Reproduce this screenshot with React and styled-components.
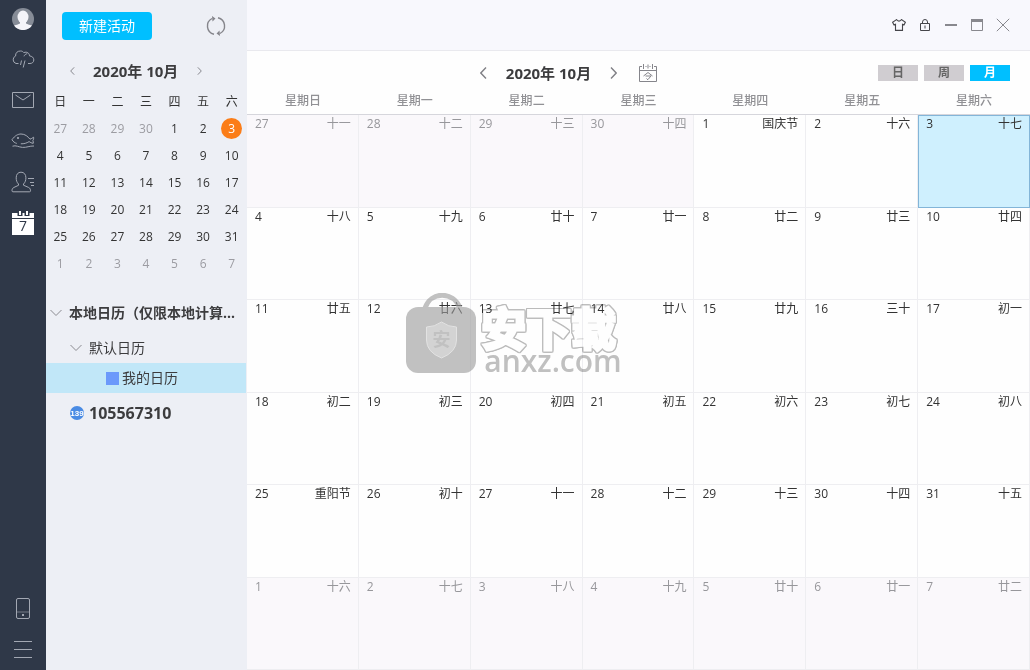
import React, { useState } from "react"
import styled, { createGlobalStyle } from 'styled-components'

const GlobalStyle = createGlobalStyle`
    * {
        box-sizing: border-box;
    }
    body {
        margin: 0;
        color: #333;
        font: 12px/18px "Open Sans", "Noto Sans CJK SC", sans-serif;
    }
    button {
        padding: 0;
        border: 0;
        background: none;
        color: inherit;
        font: inherit;
        cursor: pointer;
    }
    svg {
        display: block;
        fill: none;
        stroke: currentColor;
    }
`

const Window = styled.div`
    position: relative;
    display: flex;
    min-height: 100vh;
    background: #fefefe;
`

const Rail = styled.nav`
    display: flex;
    flex: none;
    flex-direction: column;
    width: 46px;
    background: #2f3848;
    color: #a3a8b3;
`
const RailButton = styled.button`
    display: flex;
    align-items: center;
    justify-content: center;
    height: ${props => props.$first ? '38px' : '41px'};
`
const RailSpace = styled.div`
    flex: 1;
`

const Sidebar = styled.aside`
    flex: none;
    width: 201px;
    padding-right: 1px;
    background: #edeff5;
`
const SideTop = styled.div`
    display: flex;
    align-items: center;
    justify-content: space-between;
    height: 52px;
    padding: 0 20px 0 16px;
`
const NewButton = styled.button`
    width: 90px;
    height: 28px;
    border-radius: 4px;
    background: #00bfff;
    color: #fff;
    font-size: 14px;
`
const IconButton = styled.button`
    color: #85858b;
`
const SideMonth = styled.div`
    display: flex;
    align-items: center;
    gap: 11px;
    height: 37px;
    padding-left: 16px;
`
const Arrow = styled.button`
    display: flex;
    justify-content: center;
    width: 20px;
    color: #808086;
`
const MonthTitle = styled.h2`
    margin: 0;
    color: #3c3c3e;
    font-size: 15px;
    line-height: 20px;
`

const MiniTable = styled.table`
    width: 100%;
    border-collapse: collapse;
    table-layout: fixed;
    text-align: center;

    th {
        height: 26px;
        padding: 0;
        font-weight: normal;
    }
    td {
        height: 27px;
        padding: 0;
    }
`
const MiniDay = styled.button`
    width: 21px;
    height: 21px;
    border-radius: 50%;
    background: ${props => props.$today ? '#fb7d18' : 'none'};
    color: ${props => props.$today ? '#fff' : props.$muted ? '#9c9ca2' : '#333'};
`

const Tree = styled.div`
    display: flex;
    flex-direction: column;
    padding-top: 16px;
`
const TreeRow = styled.button`
    display: flex;
    align-items: center;
    gap: ${props => props.$gap}px;
    height: ${props => props.$root ? '40px' : '30px'};
    padding-left: ${props => props.$indent}px;
    background: ${props => props.$active ? '#c1e7f8' : 'none'};
    color: #3c3c3e;
    font-size: ${props => props.$account ? '16px' : '14px'};
    font-weight: ${props => props.$root ? 'bold' : 'normal'};
    white-space: nowrap;
`
const Swatch = styled.span`
    width: 13px;
    height: 13px;
    background: #6b99fb;
`

const Main = styled.main`
    display: flex;
    flex: 1;
    flex-direction: column;
    min-width: 0;
`
const TitleBar = styled.header`
    display: flex;
    align-items: center;
    justify-content: flex-end;
    height: 51px;
    padding-right: 14px;
    border-bottom: 1px solid #e9e9ee;
    background: #f8f8fd;
`
const WindowButton = styled.button`
    display: flex;
    justify-content: center;
    width: 26px;
    color: ${props => props.$dark ? '#45454a' : '#88888e'};
`
const Toolbar = styled.div`
    display: flex;
    align-items: center;
    height: 36px;
    padding: 8px 20px 0 6px;
`
const MonthNav = styled.div`
    display: flex;
    flex: 1;
    align-items: center;
    justify-content: center;
    gap: 12px;
`
const TodayButton = styled(IconButton)`
    margin-left: 4px;
`
const Views = styled.div`
    display: flex;
    gap: 6px;
`
const ViewButton = styled.button`
    width: 40px;
    height: 16px;
    background: ${props => props.$active ? '#00bfff' : '#d0cdd1'};
    color: ${props => props.$active ? '#fff' : '#666'};
    font-weight: bold;
    line-height: 16px;
`

const MonthTable = styled.table`
    display: flex;
    flex: 1;
    flex-direction: column;
`
const MonthHead = styled.thead`
    display: block;
    color: #919195;
`
const MonthBody = styled.tbody`
    display: flex;
    flex: 1;
    flex-direction: column;
    border-top: 1px solid #d6d6dc;
`
const Week = styled.tr`
    display: grid;
    flex: 1;
    grid-template-columns: repeat(7, 1fr);
`
const WeekDay = styled.th`
    padding: 0;
    font-weight: 500;
    line-height: 27px;
`
const Day = styled.td`
    display: flex;
    justify-content: space-between;
    padding: 0 7px 0 ${props => props.$selected ? '7px' : '8px'};
    border: 1px solid;
    border-width: ${props => props.$selected ? '1px' : '0 1px 1px 0'};
    border-color: ${props => props.$selected ? '#83b5d8' : '#eeeef1'};
    background: ${props => props.$selected ? '#cff0fe' : props.$muted ? '#faf8fb' : '#fefefe'};
    color: ${props => props.$muted ? '#97979b' : '#333'};
    line-height: ${props => props.$selected ? '16px' : '18px'};
`

const Stamp = styled.div`
    position: absolute;
    inset: 0;
    display: flex;
    align-items: center;
    justify-content: center;
    gap: 5px;
    padding: 0 2px 4px 0;
    pointer-events: none;
`
const StampText = styled.div`
    padding-top: 8px;
    mix-blend-mode: multiply;
`
const StampName = styled.div`
    color: #fff;
    font-size: 45px;
    font-weight: bold;
    line-height: 48px;
    -webkit-text-stroke: 3px #fff;
    stroke-linejoin: round;
    filter: drop-shadow(1px 0 0 #bcbcbc) drop-shadow(-1px 0 0 #bcbcbc) drop-shadow(0 1px 0 #bcbcbc) drop-shadow(0 -1px 0 #bcbcbc);
`
const StampSite = styled.div`
    padding-left: 3px;
    color: #c1c1c1;
    font-size: 30px;
    font-weight: 600;
    line-height: 16px;
`

const Avatar = () => (
    <svg width="22" height="22" viewBox="0 0 22 22">
        <g stroke="none">
            <circle cx="11" cy="11" r="11" fill="#868c97" />
            <ellipse cx="11" cy="9" rx="5.5" ry="6.5" fill="#f4f4f9" />
            <path d="M2 17.4Q5 17 8 15.5V13h6v2.500q3 1.500 6 1.900A11 11 0 0 1 2 17.400Z" fill="#f4f4f9" />
        </g>
    </svg>
)
const CloudIcon = () => (
    <svg width="24" height="18" viewBox="0 0 24 18">
        <path d="M7.5 13.5H5A4 4 0 0 1 4.600 6C4.300 2.800 6.500 1 9.500 1c1.700 0 2.600.7 3.300 1.600 3.400-1.300 5.600.6 5.700 3.300 2.500.2 4.300 1.700 4.300 4 0 2.200-1.600 3.600-3.800 3.600h-2M13 6.300c.5-1.500 1.800-2.500 3.300-2.600M10.500 10.500 9.500 15M14 10.500l-1.800 7" />
    </svg>
)
const MailIcon = () => (
    <svg width="22" height="16" viewBox="0 0 22 16">
        <path d="M.5.5h21v15H.5ZM3.500 3l7.500 5 7.500-5" />
    </svg>
)
const FishIcon = () => (
    <svg width="24" height="16" viewBox="0 0 24 16">
        <path d="M1 6.700C4 2.500 7 1 10 1c4 0 6.800 2.400 9 5.200 1.200-.3 2.500-1.300 3.600-2 .2 1.300 0 2.400-.8 3.500.6.8.7 1.700.4 2.700-1.600-.3-3-1-4.100-1.800-2.600 1.600-5 2.300-8.300 2.200M1 6.700c1.100 2 2.800 3.200 4.800 3.700M1.500 13.200c3.500-1.300 6 .9 10 1.200 4 .3 7-1.600 11.500-1.400" />
        <circle cx="7" cy="5" r=".7" fill="currentColor" />
    </svg>
)
const ContactIcon = () => (
    <svg width="24" height="22" viewBox="0 0 24 22">
        <path d="M7.500 13c-1.700-1.500-2.300-3.800-2.300-6.200C5.200 3.300 7 1.200 10 1.200s4.900 2.100 4.900 5.600c0 2.400-.7 4.700-2.400 6.200v1.200l5.200 2.300c1.500.7 1.800 2 1.800 3.300 0 .7-.4 1-1 1H2c-.6 0-1-.3-1-1 0-1.400.4-2.600 1.800-3.300l4.700-2.200ZM17 7.500h6M19 11.500h4M20 14.500h3" />
    </svg>
)
const CalendarIcon = () => (
    <svg width="22" height="24" viewBox="0 0 22 24">
        <path d="M0 2h22v22H0Z" fill="#fff" stroke="none" />
        <path d="M0 7.500h22" stroke="#2f3848" />
        <path d="M5.500 0h5v5h-5ZM12.500 0h5v5h-5Z" fill="#2f3848" stroke="none" />
        <path d="M8 0v4M15 0v4" stroke="#fff" strokeWidth="2" />
        <text x="11" y="20" textAnchor="middle" fontSize="14" fill="#2f3848" stroke="none">7</text>
    </svg>
)
const PhoneIcon = () => (
    <svg width="14" height="21" viewBox="0 0 14 21">
        <rect x=".5" y=".5" width="13" height="20" rx="1.500" />
        <path d="M1 14h12" opacity=".6" />
        <path d="M6 17h2" strokeWidth="2" />
    </svg>
)
const MenuIcon = () => (
    <svg width="18" height="17" viewBox="0 0 18 17">
        <path d="M0 .5h18M0 8.500h18M0 16.500h18" />
    </svg>
)
const RefreshIcon = () => (
    <svg width="20" height="20" viewBox="0 0 20 20">
        <path d="M8 18.300A8.500 8.500 0 0 1 6 2.500M12 1.700a8.500 8.500 0 0 1 2 15.800" strokeWidth="1.400" />
        <path d="M6 0 9.500 2.500 6.500 5.500ZM14 20l-3.500-2.500 3-3Z" fill="currentColor" stroke="none" />
    </svg>
)
const Chevron = ({ left, size }) => (
    <svg width={size / 2 + 1} height={size} viewBox="0 0 7 12" strokeWidth="1.400">
        <path d={left ? "M6 .5.800 6 6 11.500" : "M1 .5 6.200 6 1 11.500"} />
    </svg>
)
const DownIcon = () => (
    <svg width="12" height="8" viewBox="0 0 12 8" color="#8a8a90">
        <path d="M.5 1 6 6.500 11.500 1" />
    </svg>
)
const AccountIcon = () => (
    <svg width="14" height="14" viewBox="0 0 14 14">
        <g stroke="none">
            <circle cx="7" cy="7" r="7" fill="#4a8be4" />
            <text x="7" y="10" textAnchor="middle" fontSize="8" fontWeight="bold" fontFamily="Liberation Sans, sans-serif" fill="#fff">139</text>
        </g>
    </svg>
)
const TodayIcon = () => (
    <svg width="18" height="18" viewBox="0 0 18 18">
        <path d="M3 2.500H.5v15h17v-15H15M6.500 2.500h1M10.500 2.500h1M4.500 0v5M9 .500v4M13.500 0v5M.5 6.500h17" />
        <path d="M4.500 12 9 8.500l4.500 3.500M6.500 12h5.500L9 15.500M7.500 14.500 9 16" />
    </svg>
)
const ShirtIcon = () => (
    <svg width="14" height="12" viewBox="0 0 14 12" strokeWidth="1.100">
        <path d="M4.500.6.6 3.200l1.300 2.600 1.600-.6v6.200h7V5.200l1.600.6 1.300-2.600L9.500.6C8.500 2.600 5.500 2.600 4.500.6Z" />
    </svg>
)
const LockIcon = () => (
    <svg width="10" height="12" viewBox="0 0 10 12">
        <path d="M.5 4.500h9v7h-9ZM2.500 4.500V3a2.500 2.500 0 0 1 5 0v1.500M5 6.500v3" />
    </svg>
)
const MinIcon = () => (
    <svg width="12" height="12" viewBox="0 0 12 12">
        <path d="M0 6h12" strokeWidth="2" />
    </svg>
)
const MaxIcon = () => (
    <svg width="12" height="12" viewBox="0 0 12 12">
        <path d="M.5.5h11v11H.5Z" />
        <path d="M0 1.500h12" strokeWidth="3" />
    </svg>
)
const CloseIcon = () => (
    <svg width="14" height="14" viewBox="0 0 14 14">
        <path d="m.800.800 12.400 12.400M13.200.800.800 13.200" />
    </svg>
)
const StampIcon = () => (
    <svg width="70" height="80" viewBox="0 0 70 80" opacity=".62">
        <path d="M19 15C25-2 47-2 54 15" stroke="#9c9c9c" strokeWidth="5" />
        <g stroke="none">
            <rect y="14" width="70" height="66" rx="12" fill="#9c9c9c" />
            <path d="M35.500 29q7 5 15 5v13q0 12-15 18-15-6-15-18V34q8 0 15-5Z" fill="#b9b9b9" stroke="#d2d2d2" />
            <text x="35.500" y="53" textAnchor="middle" fontSize="18" fontWeight="bold" fill="#9c9c9c">安</text>
        </g>
    </svg>
)

const weekDays = ['日', '一', '二', '三', '四', '五', '六']
const lunar = [
    ['十一', '十二', '十三', '十四', '国庆节', '十六', '十七'],
    ['十八', '十九', '廿十', '廿一', '廿二', '廿三', '廿四'],
    ['廿五', '廿六', '廿七', '廿八', '廿九', '三十', '初一'],
    ['初二', '初三', '初四', '初五', '初六', '初七', '初八'],
    ['重阳节', '初十', '十一', '十二', '十三', '十四', '十五'],
    ['十六', '十七', '十八', '十九', '廿十', '廿一', '廿二'],
]

// 27 September is the first day on the sheet
const weeks = lunar.map((week, row) => week.map((name, col) => {
    const date = new Date(2020, 8, 27 + row * 7 + col)
    return { name, day: date.getDate(), muted: date.getMonth() !== 9 }
}))

const MiniCalendar = () => (
    <MiniTable>
        <thead>
            <tr>{weekDays.map(name => <th key={name} scope="col">{name}</th>)}</tr>
        </thead>
        <tbody>
            {weeks.map((week, row) => (
                <tr key={row}>
                    {week.map(({ day, muted }) => (
                        <td key={day}>
                            <MiniDay $muted={muted} $today={!muted && day === 3}>{day}</MiniDay>
                        </td>
                    ))}
                </tr>
            ))}
        </tbody>
    </MiniTable>
)

const MonthCalendar = ({ selected, onSelect }) => (
    <MonthTable>
        <MonthHead>
            <Week>
                {weekDays.map(name => <WeekDay key={name} scope="col">星期{name}</WeekDay>)}
            </Week>
        </MonthHead>
        <MonthBody>
            {weeks.map((week, row) => (
                <Week key={row}>
                    {week.map(({ day, muted, name }) => (
                        <Day key={day} $muted={muted} $selected={!muted && day === selected} onClick={() => onSelect(day)}>
                            <span>{day}</span>
                            <span>{name}</span>
                        </Day>
                    ))}
                </Week>
            ))}
        </MonthBody>
    </MonthTable>
)

const App = () => {
    const [selected, setSelected] = useState(3)
    const [view, setView] = useState('月')

    return (
        <Window>
            <GlobalStyle />
            <Rail>
                <RailButton $first aria-label="账户"><Avatar /></RailButton>
                <RailButton aria-label="天气"><CloudIcon /></RailButton>
                <RailButton aria-label="邮件"><MailIcon /></RailButton>
                <RailButton aria-label="飞鱼"><FishIcon /></RailButton>
                <RailButton aria-label="联系人"><ContactIcon /></RailButton>
                <RailButton aria-label="日历"><CalendarIcon /></RailButton>
                <RailSpace />
                <RailButton aria-label="手机"><PhoneIcon /></RailButton>
                <RailButton aria-label="菜单"><MenuIcon /></RailButton>
            </Rail>
            <Sidebar>
                <SideTop>
                    <NewButton>新建活动</NewButton>
                    <IconButton aria-label="刷新"><RefreshIcon /></IconButton>
                </SideTop>
                <SideMonth>
                    <Arrow aria-label="上个月"><Chevron left size={8} /></Arrow>
                    <MonthTitle>2020年 10月</MonthTitle>
                    <Arrow aria-label="下个月"><Chevron size={8} /></Arrow>
                </SideMonth>
                <MiniCalendar />
                <Tree>
                    <TreeRow $root $indent={4} $gap={7}><DownIcon />本地日历（仅限本地计算...</TreeRow>
                    <TreeRow $indent={24} $gap={7}><DownIcon />默认日历</TreeRow>
                    <TreeRow $active $indent={60} $gap={3}><Swatch />我的日历</TreeRow>
                    <TreeRow $root $account $indent={24} $gap={5}><AccountIcon />105567310</TreeRow>
                </Tree>
            </Sidebar>
            <Main>
                <TitleBar>
                    <WindowButton $dark aria-label="皮肤"><ShirtIcon /></WindowButton>
                    <WindowButton $dark aria-label="锁定"><LockIcon /></WindowButton>
                    <WindowButton aria-label="最小化"><MinIcon /></WindowButton>
                    <WindowButton aria-label="最大化"><MaxIcon /></WindowButton>
                    <WindowButton aria-label="关闭"><CloseIcon /></WindowButton>
                </TitleBar>
                <Toolbar>
                    <MonthNav>
                        <Arrow aria-label="上个月"><Chevron left size={12} /></Arrow>
                        <MonthTitle>2020年 10月</MonthTitle>
                        <Arrow aria-label="下个月"><Chevron size={12} /></Arrow>
                        <TodayButton aria-label="今天"><TodayIcon /></TodayButton>
                    </MonthNav>
                    <Views>
                        {['日', '周', '月'].map(name => (
                            <ViewButton key={name} $active={view === name} onClick={() => setView(name)}>{name}</ViewButton>
                        ))}
                    </Views>
                </Toolbar>
                <MonthCalendar selected={selected} onSelect={setSelected} />
            </Main>
            <Stamp>
                <StampIcon />
                <StampText>
                    <StampName>安下载</StampName>
                    <StampSite>anxz.com</StampSite>
                </StampText>
            </Stamp>
        </Window>
    )
}

export default App
